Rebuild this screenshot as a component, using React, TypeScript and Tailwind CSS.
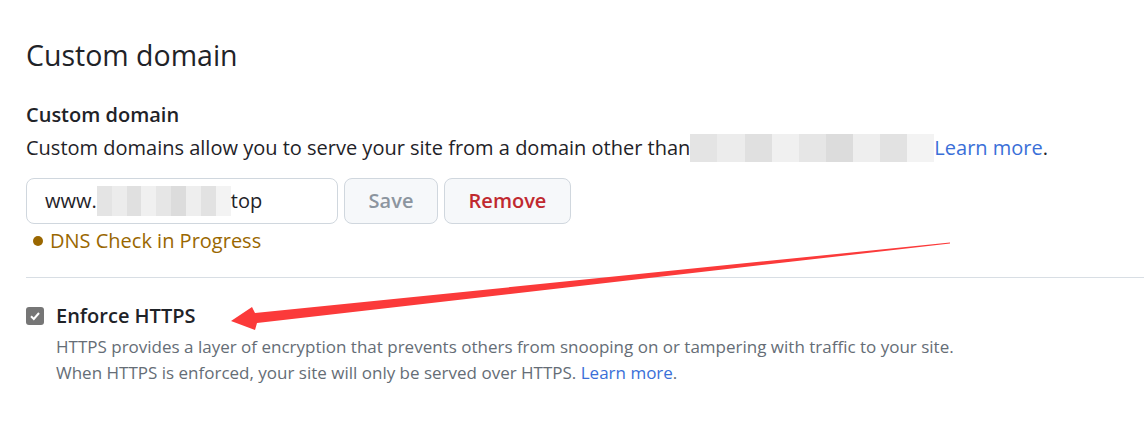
import React from "react";

const font = { fontFamily: '"Open Sans", "Noto Sans", Arial, sans-serif' };

function Blur({ className }: { className: string }) {
  return (
    <span className={"inline-block align-middle " + className}>
      <span className="flex h-full w-full">
        <span className="flex-1 bg-[#e4e4e4]" />
        <span className="flex-1 bg-[#ececec]" />
        <span className="flex-1 bg-[#e0e0e0]" />
        <span className="flex-1 bg-[#f0f0f0]" />
        <span className="flex-1 bg-[#e6e6e6]" />
        <span className="flex-1 bg-[#dcdcdc]" />
        <span className="flex-1 bg-[#eeeeee]" />
        <span className="flex-1 bg-[#e2e2e2]" />
        <span className="flex-1 bg-[#f3f3f3]" />
      </span>
    </span>
  );
}

export default function App() {
  return (
    <div className="relative w-[1144px] h-[442px] bg-white overflow-hidden text-[#1f2328]" style={font}>
      <div className="pl-[26px] pt-[35px]">
        <h2 className="text-[28.5px] leading-[40px] font-normal">Custom domain</h2>
        <div className="mt-[25px]">
          <div className="text-[20px] leading-[30px] font-semibold">Custom domain</div>
          <div className="mt-[3px] text-[20px] leading-[30px] flex items-center">
            <span>Custom domains allow you to serve your site from a domain other than</span>
            <Blur className="w-[244px] h-[28px] rounded-[6px]" />
            <span className="text-[#3a6fd8]">Learn more</span>
            <span>.</span>
          </div>
        </div>
        <div className="mt-[15px] flex gap-[6px]">
          <div className="w-[312px] h-[46px] border border-[#d0d7de] rounded-[8px] flex items-center pl-[18px] text-[20px]">
            <span>www.</span>
            <Blur className="w-[134px] h-[30px]" />
            <span>top</span>
          </div>
          <button className="w-[94px] h-[46px] border border-[#d0d7de] rounded-[8px] bg-[#f6f8fa] text-[20px] font-semibold text-[#8c959f]">
            Save
          </button>
          <button className="w-[127px] h-[46px] border border-[#d0d7de] rounded-[8px] bg-[#f6f8fa] text-[20px] font-semibold text-[#c0292f]">
            Remove
          </button>
        </div>
        <div className="mt-[2px] flex items-center text-[20px] leading-[30px] text-[#9a6700]">
          <span className="w-[10px] h-[10px] rounded-full bg-[#9a6700] ml-[7px] mr-[7px]" />
          <span>DNS Check in Progress</span>
        </div>
      </div>
      <div className="ml-[26px] mt-[21px] border-t border-[#d8dee4]" />
      <div className="pl-[26px] pt-[25px]">
        <div className="flex items-center gap-[12px]">
          <span className="w-[18px] h-[18px] rounded-[3px] bg-[#767676] flex items-center justify-center">
            <svg width="12" height="12" viewBox="0 0 12 12">
              <path d="M2 6.2 L4.8 9 L10 3" fill="none" stroke="white" strokeWidth="2" />
            </svg>
          </span>
          <span className="text-[20px] leading-[26px] font-semibold">Enforce HTTPS</span>
        </div>
        <div className="mt-[5px] pl-[30px] text-[17px] leading-[26px] text-[#656d76]">
          <div>HTTPS provides a layer of encryption that prevents others from snooping on or tampering with traffic to your site.</div>
          <div>
            When HTTPS is enforced, your site will only be served over HTTPS. <span className="text-[#3a6fd8]">Learn more</span>.
          </div>
        </div>
      </div>
      <svg className="absolute left-0 top-0 pointer-events-none" width="1144" height="442">
        <polygon
          points="231,321 252,307 255,313 950,242.5 950,243.5 257,323 255,330"
          fill="#fb3a3a"
        />
      </svg>
    </div>
  );
}
